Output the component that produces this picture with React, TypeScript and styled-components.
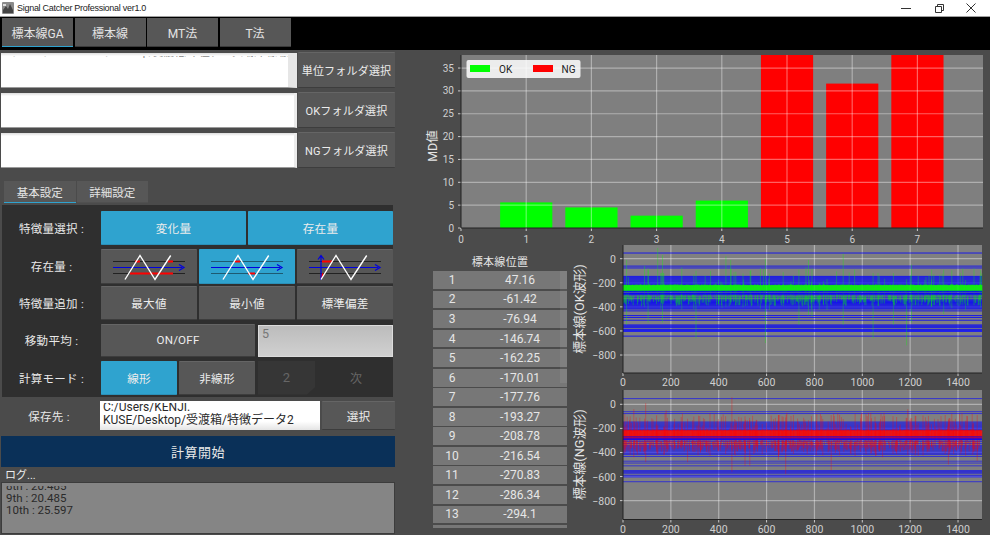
import { useMemo } from "react";
import styled, { createGlobalStyle } from "styled-components";

const FONT = `Roboto, "Noto Sans CJK JP", sans-serif`;

const GlobalStyle = createGlobalStyle`
  html, body {
    margin: 0;
    height: 535px;
    overflow: hidden;
    background: #4b4b4b;
  }
  * { box-sizing: border-box; }
`;

const Window = styled.div`
  width: 990px;
  height: 535px;
  display: flex;
  flex-direction: column;
  overflow: hidden;
  font-family: ${FONT};
  color: #e8e8e8;
  background: #4b4b4b;
`;

const TitleBar = styled.header`
  height: 17px;
  flex: none;
  display: flex;
  align-items: center;
  background: #fff;
  border-bottom: 1px solid #a0a0a0;
  padding-left: 2px;
`;

const TitleText = styled.span`
  margin-left: 3px;
  font-family: "Liberation Sans", sans-serif;
  font-size: 9px;
  letter-spacing: -0.28px;
  color: #222;
  flex: 1;
`;

const WinControls = styled.div`
  display: flex;
  margin-right: 9px;
  gap: 12.5px;
`;

const WinIcon = styled.svg`
  width: 20px;
  height: 12px;
  fill: none;
  stroke: #333;
  stroke-width: 1;
`;

const TabBar = styled.nav`
  height: 33px;
  flex: none;
  background: #000;
  display: flex;
  gap: 1.5px;
  padding: 1px 0 3px 2px;
`;

const MainTab = styled.button<{ $active?: boolean }>`
  width: 71px;
  border: 0;
  padding: 0;
  font: 12px ${FONT};
  color: #e4e4e4;
  background: #575757;
  border-bottom: 1px solid ${(p) => (p.$active ? "#2fa3cf" : "#3a3a3a")};
`;

const Body = styled.main`
  flex: 1;
  min-height: 0;
  display: grid;
  grid-template-columns: 420px 570px;
`;

const LeftColumn = styled.section`
  width: 395px;
  padding-top: 2px;
  display: flex;
  flex-direction: column;
`;

const FolderRows = styled.div`
  display: flex;
  flex-direction: column;
  gap: 4px;
`;

const FolderRow = styled.div`
  height: 36px;
  display: grid;
  grid-template-columns: 296px 97px;
  gap: 1px;
  padding-left: 1px;
`;

const PathInput = styled.div<{ $bar?: boolean }>`
  margin-top: 1px;
  background: linear-gradient(#dcdcdc 0, #fff 3px);
  padding: 3px 0 0 3px;
  border-right: ${(p) => (p.$bar ? "9px solid #e6e6e6" : "3px solid #ececec")};
  border-bottom: 1px solid #9a9a9a;
`;

const PathClip = styled.div`
  height: 100%;
  overflow: hidden;
  color: #888;
  font-size: 10.5px;
  line-height: 13px;
  white-space: nowrap;
`;

const ClippedLine = styled.div`
  margin-top: -10px;
`;

const Button = styled.button<{ $active?: boolean; $size?: number }>`
  border: 0;
  padding: 0;
  min-width: 0;
  font-family: ${FONT};
  font-size: ${(p) => p.$size ?? 11.6}px;
  letter-spacing: 0.2px;
  color: #ececec;
  background: ${(p) => (p.$active ? "#2fa3cf" : "#575757")};
  border-top: 1px solid ${(p) => (p.$active ? "#2fa3cf" : "#656565")};
  border-bottom: 1px solid ${(p) => (p.$active ? "#2a90b8" : "#3d3d3d")};
  border-radius: 1px;
  display: flex;
  align-items: center;
  justify-content: center;
`;

const SubTabs = styled.div`
  margin: 13px 0 2px 4px;
  height: 22px;
  display: flex;
  gap: 1px;
`;

const SubTab = styled.button<{ $active?: boolean }>`
  width: 71.5px;
  border: 0;
  padding: 0;
  font: 11.5px ${FONT};
  color: #e4e4e4;
  background: #575757;
  border-bottom: 1px solid ${(p) => (p.$active ? "#2fa3cf" : "#505050")};
`;

const SettingsPanel = styled.div`
  margin-left: 2px;
  width: 391px;
  height: 192px;
  background: #2f2f2f;
  padding-top: 6px;
  display: flex;
  flex-direction: column;
  gap: 4px;
`;

const SettingRow = styled.div`
  height: 33.5px;
  display: grid;
  grid-template-columns: 99px 1fr;
`;

const RowLabel = styled.div`
  display: flex;
  align-items: center;
  justify-content: center;
  font-size: 11.5px;
  letter-spacing: 0.3px;
  white-space: pre;
  color: #e8e8e8;
`;

const Controls = styled.div<{ $cols: string }>`
  display: grid;
  grid-template-columns: ${(p) => p.$cols};
  gap: 2px;
`;

const AverageInput = styled.div`
  margin-left: 1px;
  margin-top: 1px;
  background: linear-gradient(#bcbcbc, #d0d0d0);
  border: 1px solid #dcdcdc;
  color: #777;
  font-size: 12.5px;
  padding: 0 3px;
`;

const SpinBox = styled.div`
  background: #363636;
  color: #666;
  font-size: 13px;
  display: flex;
  align-items: center;
  justify-content: center;
  margin-left: 1px;
  clip-path: polygon(0 0, 100% 0, 100% 78%, 86% 100%, 0 100%);
`;

const SpinUnit = styled.div`
  color: #666;
  font-size: 12px;
  display: flex;
  align-items: center;
  justify-content: center;
`;

const SaveRow = styled.div`
  height: 29px;
  margin-top: 4px;
  display: grid;
  gap: 0 2px;
  grid-template-columns: 98px 220px 73px;
`;

const SavePath = styled.div`
  background: linear-gradient(#fff 70%, #e4e4e4);
  padding: 2px 0 0 3px;
`;

const SavePathClip = styled.div`
  height: 100%;
  overflow: hidden;
  color: #2a2a2a;
  font-size: 12px;
  line-height: 13px;
  white-space: nowrap;
`;

const ClippedPath = styled.div`
  margin-top: -2.5px;
`;

const StartButton = styled.button`
  height: 31px;
  margin: 6px 0 0 1px;
  border: 0;
  padding: 0;
  font: 13px ${FONT};
  letter-spacing: 0.5px;
  color: #e8e8e8;
  background: #0a3058;
`;

const LogLabel = styled.div`
  height: 15px;
  padding: 2px 0 0 5px;
  font-size: 11px;
  line-height: 13px;
  color: #eee;
`;

const LogBox = styled.div`
  height: 52px;
  margin-left: 1px;
  background: #858585;
  border: 1px solid #3c3c3c;
  padding: 3px 0 0 4px;
`;

const LogClip = styled.div`
  height: 100%;
  overflow: hidden;
  color: #2a2a2a;
  font-size: 11.5px;
  line-height: 12px;
`;

const LogLines = styled.div`
  margin-top: -6px;
`;

const RightColumn = styled.section`
  display: flex;
  flex-direction: column;
  min-height: 0;
`;

const ChartSvg = styled.svg`
  display: block;
  flex: none;
  font-family: ${FONT};
`;

const LowerArea = styled.div`
  display: grid;
  grid-template-columns: 150px 420px;
`;

const TableSide = styled.div`
  padding: 9px 3px 0 13px;
  display: flex;
  flex-direction: column;
`;

const TableTitle = styled.div`
  height: 18px;
  text-align: center;
  font-size: 11px;
  letter-spacing: 0.3px;
  color: #e4e4e4;
`;

const TableClip = styled.div`
  position: relative;
  height: 257px;
  overflow: hidden;
`;

const ValueRow = styled.div`
  height: 17.8px;
  margin-bottom: 1.76px;
  display: grid;
  grid-template-columns: 38px 98px;
  align-items: center;
  text-align: center;
  background: #777;
  font-size: 12px;
  color: #e6e6e6;
`;

const ScrollThumb = styled.div`
  position: absolute;
  top: 0;
  right: 0;
  width: 7px;
  height: 112px;
  background: rgba(255, 255, 255, 0.07);
`;

const ChartStack = styled.div`
  display: flex;
  flex-direction: column;
`;

// 標本線の位置（表に出ている13本とその先）
const LINE_VALUES = [
  47.16, -61.42, -76.94, -146.74, -154.5, -162.25, -170.01, -177.76, -185.5, -193.27, -201, -208.78, -216.54,
  -270.83, -286.34, -294.1, -309.6, -325.1, -340.6, -348.4, -356.1, -363.9, -371.6, -379.4, -387.1, -394.9,
  -402.6, -410.4, -418.1, -433.6, -472.4, -487.9, -511.2, -550, -557.8, -565.5, -573.3, -588.8, -596.5, -604.3,
  -643.1,
];

const TABLE_ROWS = [
  "47.16", "-61.42", "-76.94", "-146.74", "-162.25", "-170.01", "-177.76", "-193.27", "-208.78", "-216.54",
  "-270.83", "-286.34", "-294.1", "-309.6",
];

const random = (seed: number) => () => {
  seed = (seed + 0x6d2b79f5) | 0;
  let t = Math.imul(seed ^ (seed >>> 15), 1 | seed);
  t = (t + Math.imul(t ^ (t >>> 7), 61 | t)) ^ t;
  return ((t ^ (t >>> 14)) >>> 0) / 4294967296;
};

const GRID = "rgba(255,255,255,0.38)";
const TICK = "#d0d0d0";

const BARS = [
  { x: 1, v: 5.6, c: "#00ff00" },
  { x: 2, v: 4.5, c: "#00ff00" },
  { x: 3, v: 2.7, c: "#00ff00" },
  { x: 4, v: 6.0, c: "#00ff00" },
  { x: 5, v: 40, c: "#ff0000" },
  { x: 6, v: 31.6, c: "#ff0000" },
  { x: 7, v: 40, c: "#ff0000" },
];

const MdChart = () => {
  const left = 41;
  const right = 563;
  const top = 5;
  const bottom = 178;
  const px = (v: number) => left + v * 65.2;
  const py = (v: number) => bottom - v * 4.57;
  return (
    <ChartSvg width={570} height={194} viewBox="0 0 570 194">
      <rect x={left} y={top} width={right - left} height={bottom - top} fill="#7f7f7f" />
      {BARS.map((b) => (
        <rect
          key={b.x}
          x={px(b.x - 0.4)}
          y={Math.max(py(b.v), top)}
          width={52.2}
          height={bottom - Math.max(py(b.v), top)}
          fill={b.c}
        />
      ))}
      {[0, 1, 2, 3, 4, 5, 6, 7].map((t) => (
        <g key={t}>
          {t > 0 && <line x1={px(t)} x2={px(t)} y1={top} y2={bottom} stroke={GRID} strokeWidth={1.2} />}
          <text x={px(t)} y={193} fontSize={10} fill={TICK} textAnchor="middle">
            {t}
          </text>
          <line x1={px(t)} x2={px(t)} y1={bottom} y2={bottom + 3} stroke="#ccc" />
        </g>
      ))}
      {[0, 5, 10, 15, 20, 25, 30, 35].map((t) => (
        <g key={t}>
          {t > 0 && <line x1={left} x2={right} y1={py(t)} y2={py(t)} stroke={GRID} strokeWidth={1.2} />}
          <text x={left - 7} y={py(t) + 3.5} fontSize={10} fill={TICK} textAnchor="end">
            {t}
          </text>
          <line x1={left - 3} x2={left} y1={py(t)} y2={py(t)} stroke="#ccc" />
        </g>
      ))}
      <line x1={left} x2={left} y1={top} y2={bottom} stroke="#222" />
      <line x1={left} x2={right} y1={bottom} y2={bottom} stroke="#222" />
      <text transform="translate(17 96) rotate(-90)" fontSize={12.5} fill="#e4e4e4" textAnchor="middle">
        MD値
      </text>
      <rect x={46.5} y={10} width={114} height={18} rx={2} fill="#fff" fillOpacity={0.85} />
      <rect x={50} y={15} width={20} height={7} fill="#00ff00" />
      <text x={79} y={23} fontSize={10} fill="#222">
        OK
      </text>
      <rect x={113} y={15} width={20} height={7} fill="#ff0000" />
      <text x={141.5} y={23} fontSize={10} fill="#222">
        NG
      </text>
    </ChartSvg>
  );
};

const SPIKES_OK: [number, number, number][] = [
  [145, 90, -300], [165, 30, -530], [430, 20, -400], [450, -10, -300], [595, 0, -700], [775, -10, -470],
  [920, 40, -550], [305, -100, -660], [1045, -120, -660], [1185, -170, -720], [735, -90, -550], [15, -10, -550],
  [105, -80, -530], [90, -60, -400], [1205, -50, -530], [1290, -90, -400], [1340, -90, -460], [1420, -80, -380],
  [1130, -120, -550], [790, -80, -480],
];

const SPIKES_NG: [number, number, number][] = [
  [95, 10, -480], [455, 60, -560], [680, -110, -580], [870, -90, -550], [180, -50, -400], [45, -40, -440],
  [1190, -40, -420], [30, -100, -420], [270, -120, -480], [510, -100, -510], [530, -130, -510], [1085, -100, -440],
  [1360, -120, -500], [1480, -90, -470], [650, -90, -460], [970, -80, -430],
];

interface WaveProps {
  height: number;
  top: number;
  bottom: number;
  zero: number;
  color: string;
  title: string;
  seed: number;
  spikes: [number, number, number][];
  coreFrom: number;
  coreTo: number;
  lineAlpha: number;
  tallRate: number;
}

const WaveChart = ({
  height,
  top,
  bottom,
  zero,
  color,
  title,
  seed,
  spikes,
  coreFrom,
  coreTo,
  lineAlpha,
  tallRate,
}: WaveProps) => {
  const left = 53;
  const right = 412;
  const px = (v: number) => left + v * 0.2393;
  const py = (v: number) => zero - v * 0.1204;

  const { core, mid, tall } = useMemo(() => {
    const r = random(seed);
    let coreD = "";
    let midD = "";
    let tallD = "";
    for (let x = left; x < right; x += 0.6) {
      const a = x.toFixed(1);
      coreD += `M${a} ${py(coreFrom - r() * 8).toFixed(1)}V${py(coreTo + r() * 8).toFixed(1)}`;
      if (r() < 0.6) {
        midD += `M${a} ${py(-295 - r() * 20).toFixed(1)}V${py(-320 - r() * 75).toFixed(1)}`;
      }
      if (r() < tallRate) {
        tallD += `M${a} ${py(-70 - r() * 130).toFixed(1)}V${py(-300 - r() * 130).toFixed(1)}`;
      }
    }
    spikes.forEach(([sx, hi, lo]) => {
      tallD += `M${px(sx).toFixed(1)} ${py(hi).toFixed(1)}V${py(lo).toFixed(1)}`;
    });
    return { core: coreD, mid: midD, tall: tallD };
  }, [seed]);

  const xTicks = [0, 200, 400, 600, 800, 1000, 1200, 1400];
  const yTicks = [0, -200, -400, -600, -800];

  return (
    <ChartSvg width={420} height={height} viewBox={`0 0 420 ${height}`}>
      <rect x={left} y={top} width={right - left} height={bottom - top} fill="#808080" />
      {xTicks.map((t) => (
        <g key={t}>
          {t > 0 && <line x1={px(t)} x2={px(t)} y1={top} y2={bottom} stroke={GRID} strokeWidth={1.2} />}
          <line x1={px(t)} x2={px(t)} y1={bottom} y2={bottom + 3} stroke="#ccc" />
          <text x={px(t)} y={bottom + 13} fontSize={10.5} fill={TICK} textAnchor="middle">
            {t}
          </text>
        </g>
      ))}
      {yTicks.map((t) => (
        <g key={t}>
          <line x1={left} x2={right} y1={py(t)} y2={py(t)} stroke={GRID} strokeWidth={1.2} />
          <line x1={left - 3} x2={left} y1={py(t)} y2={py(t)} stroke="#ccc" />
          <text x={left - 7} y={py(t) + 4} fontSize={10.5} fill={TICK} textAnchor="end">
            {t === 0 ? "0" : `\u2212${-t}`}
          </text>
        </g>
      ))}
      {LINE_VALUES.map((v) => (
        <line key={v} x1={left} x2={right} y1={py(v)} y2={py(v)} stroke="#0000ff" strokeOpacity={lineAlpha} strokeWidth={0.9} />
      ))}
      <path d={tall} stroke={color} strokeWidth={0.7} strokeOpacity={0.45} fill="none" />
      <path d={mid} stroke={color} strokeWidth={0.6} strokeOpacity={0.6} fill="none" />
      <path d={core} stroke={color} strokeWidth={0.8} strokeOpacity={0.95} fill="none" />
      {LINE_VALUES.filter((v) => v > -300 && v < -260).map((v) => (
        <line key={v} x1={left} x2={right} y1={py(v)} y2={py(v)} stroke="#0000ff" strokeOpacity={0.85} strokeWidth={1} />
      ))}
      <line x1={left} x2={left} y1={top} y2={bottom} stroke="#222" />
      <line x1={left} x2={right} y1={bottom} y2={bottom} stroke="#222" />
      <text
        transform={`translate(14 ${(top + bottom) / 2}) rotate(-90)`}
        fontSize={12.8}
        fill="#e4e4e4"
        textAnchor="middle"
      >
        {title}
      </text>
    </ChartSvg>
  );
};

const LevelIcon = ({ variant, rule }: { variant: number; rule: string }) => (
  <svg width="96" height="33" viewBox="0 0 96 33" fill="none">
    <line x1="12" x2="84" y1="11.5" y2="11.5" stroke={rule} />
    <line x1="12" x2="84" y1="23.5" y2="23.5" stroke={rule} />
    {variant === 0 && (
      <path d="M34 11.5h5M67 11.5h5M29 23.5h43" stroke="#ff0000" strokeWidth="2" />
    )}
    {variant === 1 && <path d="M36 11.5h5M49 23.5h7" stroke="#ff0000" strokeWidth="2" />}
    {variant === 2 && <path d="M25 11.5h10M26 23.5l-2 4" stroke="#ff0000" strokeWidth="2" />}
    <path d="M12 17.5h69" stroke="#0000e0" strokeWidth="1.2" />
    <path d="M78 14.5l5 3-5 3" stroke="#0000e0" strokeWidth="1.2" />
    {variant === 2 && (
      <path d="M24 30V6M21 9.5l3-4 3 4" stroke="#0000e0" strokeWidth="1.2" />
    )}
    <path d="M24 29.5L39 5.5L54 29.5L69.7 5.5" stroke="#fff" strokeWidth="1.4" />
  </svg>
);

const App = () => {
  return (
    <Window>
      <GlobalStyle />
      <TitleBar>
        <svg width="12" height="12" viewBox="0 0 12 12">
          <rect width="12" height="12" rx="1" fill="#8a8a8a" />
          <path d="M1 8l3-4 2 3 2-5 3 6v3H1z" fill="#444" />
          <rect x="1" y="2" width="3" height="2" fill="#ddd" />
        </svg>
        <TitleText>Signal Catcher Professional ver1.0</TitleText>
        <WinControls>
          <WinIcon viewBox="0 0 20 12">
            <path d="M5 6.5h10" />
          </WinIcon>
          <WinIcon viewBox="0 0 20 12">
            <path d="M6.5 4.5h6v6h-6zM8.5 4.5v-2h6v6h-2" />
          </WinIcon>
          <WinIcon viewBox="0 0 20 12">
            <path d="M5.5 1.5l9 9M14.5 1.5l-9 9" />
          </WinIcon>
        </WinControls>
      </TitleBar>

      <TabBar>
        <MainTab $active>標本線GA</MainTab>
        <MainTab>標本線</MainTab>
        <MainTab>MT法</MainTab>
        <MainTab>T法</MainTab>
      </TabBar>

      <Body>
        <LeftColumn>
          <FolderRows>
            <FolderRow>
              <PathInput $bar>
                <PathClip>
                  <ClippedLine>C:/Users/KENJI.KUSE/Desktop/受渡箱/単位データ/標本線 波形データ</ClippedLine>
                </PathClip>
              </PathInput>
              <Button $size={11}>単位フォルダ選択</Button>
            </FolderRow>
            <FolderRow>
              <PathInput />
              <Button $size={11}>OKフォルダ選択</Button>
            </FolderRow>
            <FolderRow>
              <PathInput />
              <Button $size={11}>NGフォルダ選択</Button>
            </FolderRow>
          </FolderRows>

          <SubTabs>
            <SubTab $active>基本設定</SubTab>
            <SubTab>詳細設定</SubTab>
          </SubTabs>

          <SettingsPanel>
            <SettingRow>
              <RowLabel>特徴量選択 :</RowLabel>
              <Controls $cols="1fr 1fr">
                <Button $active>変化量</Button>
                <Button $active>存在量</Button>
              </Controls>
            </SettingRow>
            <SettingRow>
              <RowLabel>存在量 :</RowLabel>
              <Controls $cols="1fr 1fr 1fr">
                <Button>
                  <LevelIcon variant={0} rule="#222" />
                </Button>
                <Button $active>
                  <LevelIcon variant={1} rule="#1d5a72" />
                </Button>
                <Button>
                  <LevelIcon variant={2} rule="#222" />
                </Button>
              </Controls>
            </SettingRow>
            <SettingRow>
              <RowLabel>特徴量追加 :</RowLabel>
              <Controls $cols="1fr 1fr 1fr">
                <Button>最大値</Button>
                <Button>最小値</Button>
                <Button>標準偏差</Button>
              </Controls>
            </SettingRow>
            <SettingRow>
              <RowLabel>移動平均 :</RowLabel>
              <Controls $cols="154px 136px">
                <Button>ON/OFF</Button>
                <AverageInput>5</AverageInput>
              </Controls>
            </SettingRow>
            <SettingRow>
              <RowLabel>計算モード :</RowLabel>
              <Controls $cols="76px 76px 58px 78px">
                <Button $active>線形</Button>
                <Button>非線形</Button>
                <SpinBox>2</SpinBox>
                <SpinUnit>次</SpinUnit>
              </Controls>
            </SettingRow>
          </SettingsPanel>

          <SaveRow>
            <RowLabel>保存先 :</RowLabel>
            <SavePath>
              <SavePathClip>
                <ClippedPath>
                  C:/Users/KENJI.
                  <br />
                  KUSE/Desktop/受渡箱/特徴データ2
                </ClippedPath>
              </SavePathClip>
            </SavePath>
            <Button>選択</Button>
          </SaveRow>

          <StartButton>計算開始</StartButton>

          <LogLabel>ログ...</LogLabel>
          <LogBox>
            <LogClip>
              <LogLines>
                8th : 20.485
                <br />
                9th : 20.485
                <br />
                10th : 25.597
              </LogLines>
            </LogClip>
          </LogBox>
        </LeftColumn>

        <RightColumn>
          <MdChart />
          <LowerArea>
            <TableSide>
              <TableTitle>標本線位置</TableTitle>
              <TableClip>
                {TABLE_ROWS.map((v, i) => (
                  <ValueRow key={v}>
                    <span>{i + 1}</span>
                    <span>{v}</span>
                  </ValueRow>
                ))}
                <ScrollThumb />
              </TableClip>
            </TableSide>
            <ChartStack>
              <WaveChart
                height={145}
                top={1}
                bottom={129}
                zero={14.7}
                color="#00ff00"
                title="標本線(OK波形)"
                seed={11}
                spikes={SPIKES_OK}
                coreFrom={-214}
                coreTo={-274}
                lineAlpha={0.9}
                tallRate={0.1}
              />
              <WaveChart
                height={146}
                top={1}
                bottom={130.5}
                zero={15.3}
                color="#ff0000"
                title="標本線(NG波形)"
                seed={29}
                spikes={SPIKES_NG}
                coreFrom={-210}
                coreTo={-290}
                lineAlpha={0.68}
                tallRate={0.32}
              />
            </ChartStack>
          </LowerArea>
        </RightColumn>
      </Body>
    </Window>
  );
};

export default App;
